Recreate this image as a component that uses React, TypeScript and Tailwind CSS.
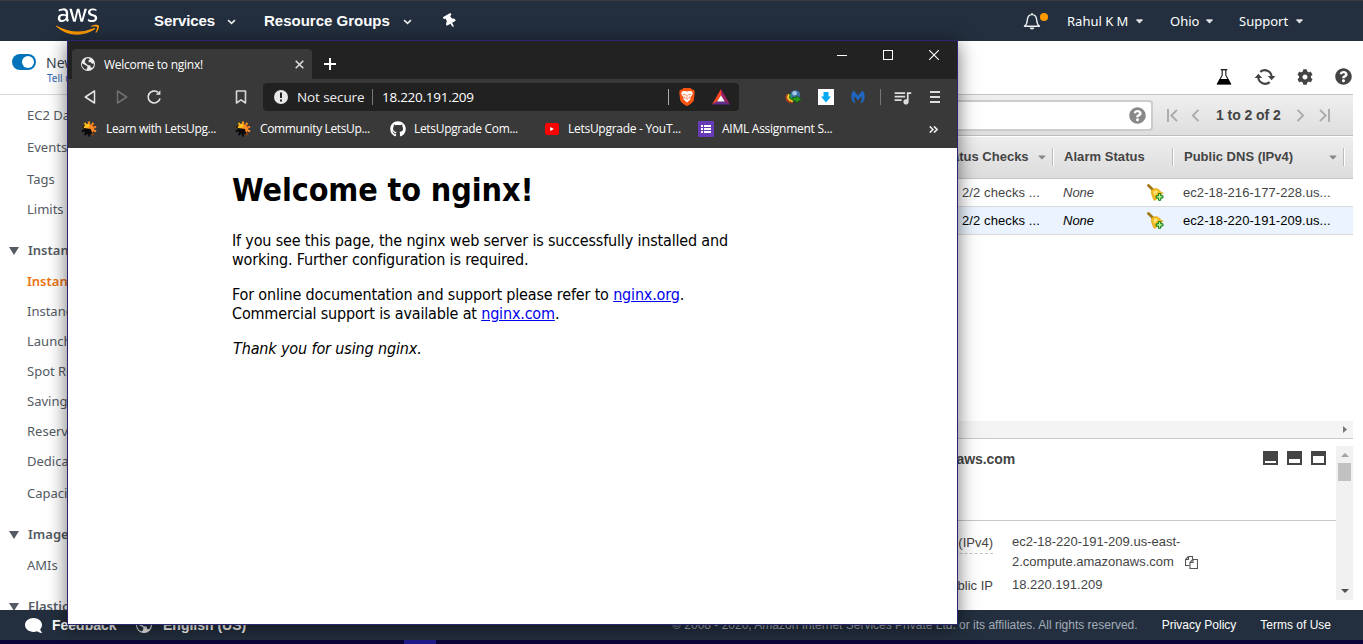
import React from "react";
import { FaAws, FaCaretDown, FaCog, FaGithub, FaQuestionCircle, FaThumbtack, FaComment } from "react-icons/fa";
import { MdQueueMusic } from "react-icons/md";

const chromeFont = "font-['Open_Sans','Noto_Sans',sans-serif]";
const ember = "font-['Noto_Sans',sans-serif]";

/* ---------- small drawings ---------- */

function Chevron({ className = "" }: { className?: string }) {
  return (
    <svg viewBox="0 0 10 7" className={`h-[6px] w-[9px] ${className}`} fill="none" stroke="#e4e6e8" strokeWidth="2">
      <path d="M1 1.2 5 5l4-3.8" />
    </svg>
  );
}

function SmallCaret({ className = "" }: { className?: string }) {
  return (
    <svg viewBox="0 0 8 5" className={`h-[5px] w-[7px] ${className}`}>
      <path d="M0.5 0h7v1L4.4 4.6h-.8L.5 1z" fill="#dfe1e4" />
    </svg>
  );
}

function GlobeIcon({ className = "", land }: { className?: string; land: string }) {
  return (
    <svg viewBox="0 0 14 14" className={className}>
      <circle cx="7" cy="7" r="7" fill="#ececec" />
      <path
        d="M5.200 1.600 8 1.300l.6 1.500-1.300.9.4 1.300 2 .3 1.300 1.500 2-.3-.4 2.600-1.300 1.700-1.500-.4-.5-2-2.600-.4L5 6.500 3.800 5.300l.2-1.500zM1 6.200l1.800 1 1.700 1 1.700.8.3 1.300-1.200 2.400-1.900-.7A6.400 6.400 0 0 1 1 6.200z"
        fill={land}
      />
    </svg>
  );
}

function BellIcon() {
  return (
    <svg viewBox="0 0 18 18" className="h-[18px] w-[18px]" fill="none" stroke="#eceef0" strokeWidth="1.4">
      <path d="M1.5 14.2c2.2-1.5 2.6-3.4 2.8-6 .2-3.300 1.800-5.600 4.700-5.600s4.500 2.300 4.700 5.600c.2 2.600.6 4.500 2.800 6z" strokeLinejoin="round" />
      <path d="M9 1v1.500" />
      <path d="M6.600 15.400h4.800c-.2 1.300-1.200 2-2.400 2s-2.200-.7-2.400-2z" fill="#eceef0" stroke="none" />
    </svg>
  );
}

function FlaskIcon() {
  return (
    <svg viewBox="0 0 16 16" className="h-4 w-4">
      <path d="M4.700.7h6.600" stroke="#222" strokeWidth="1.400" />
      <path d="M6.200 1v5.200L1.600 14.600h12.800L9.800 6.200V1" fill="none" stroke="#222" strokeWidth="1.200" />
      <path d="M3.900 10h8.200l3.100 5.400H.8z" fill="#000" />
    </svg>
  );
}

function RefreshIcon() {
  return (
    <svg viewBox="0 0 22 18" className="h-[18px] w-[22px]" fill="none" stroke="#444" strokeWidth="2.200">
      <path d="M6.300 3.900A6.900 6.900 0 0 1 17.700 8.500" />
      <path d="M15.700 14.100A6.900 6.900 0 0 1 4.300 9.500" />
      <path d="M13.800 8h7.600l-3.800 4.300z" fill="#444" stroke="none" />
      <path d="M.6 10h7.600L4.400 5.700z" fill="#444" stroke="none" />
    </svg>
  );
}

function BellAddIcon() {
  return (
    <svg viewBox="0 0 17 18" className="h-[18px] w-[17px]">
      <path d="M1.500 1.500 6 6" stroke="#a27613" strokeWidth="2.800" strokeLinecap="round" />
      <path d="M4.500 6.500C7 4 10.500 4 12.500 6.200c1.200 1.300 2 2.300 3.700 2.700L8.800 16c-1.200.6-2.200.2-2.500-1C5.800 12.500 3.300 9 4.500 6.500z" fill="#f0b91c" stroke="#d79c14" strokeWidth=".5" />
      <path d="M7 7c1.500-1.200 3-1 4 0l-3.300 5C7 10.500 6 8.500 7 7z" fill="#ffe27a" />
      <path d="M11.500 9.500h2.200v2.300H16V14h-2.300v2.300h-2.200V14H9.200v-2.200h2.300z" fill="#b9f29c" stroke="#0b7a12" strokeWidth="1" />
    </svg>
  );
}

function GearFlame() {
  const teeth = [0, 36, 72, 108, 144, 180, 216, 252, 288, 324];
  const colors = ["#fb9a1e", "#fb8c1e", "#fb7a2a", "#f58a33", "#8a4312", "#0a0a0a", "#0a0a0a", "#0a0a0a", "#3a2706", "#e8a70c"];
  return (
    <svg viewBox="0 0 16 16" className="h-4 w-4">
      {teeth.map((a, i) => (
        <rect key={a} x="6.900" y="0.500" width="2.200" height="4" fill={colors[i]} transform={`rotate(${a} 8 8)`} />
      ))}
      <circle cx="8" cy="8" r="5.200" fill="#0a0a0a" />
      <path d="M2.800 7A5.300 5.300 0 0 1 13.200 8a5.300 5.300 0 0 1-2 4.100L9.800 8z" fill="#fb8a22" />
      <path d="M2.800 7A5.300 5.300 0 0 1 8.600 2.800L8.300 6.600z" fill="#ffc21f" />
    </svg>
  );
}

function BraveIcon() {
  return (
    <svg viewBox="0 0 16 18" className="h-[18px] w-4">
      <path d="M4.500 0h7l1.500 1.600 2.200.4.500 3-1 7.500c-.3 1.600-5 5-6.700 5.500C6.300 17.500 1.600 14.100 1.300 12.500L.3 5l.5-3L3 1.600z" fill="#fb5412" />
      <path d="M3 3.500 5.500 3 8 3.500l2.500-.5 2.500.5.800 2.300-2.200 3.500-.2 2.300L8 14.600l-3.400-3-.2-2.300L2.200 5.800z" fill="#fff" />
      <path d="M4 6.300 6.700 7M12 6.300 9.300 7M8 6.500v3M6.300 10 8 11.200 9.700 10M5 8.500l.8 1.800M11 8.500l-.8 1.800" stroke="#fb5412" strokeWidth="0.800" fill="none" />
    </svg>
  );
}

function BatIcon() {
  return (
    <svg viewBox="0 0 18 16" className="h-4 w-[18px]">
      <path d="M9 0v6.200L5.200 12.500 0 15.500z" fill="#ff4724" />
      <path d="M9 0v6.200l3.800 6.300 5.200 3z" fill="#9e1f63" />
      <path d="M0 15.500l5.200-3h7.600l5.200 3z" fill="#662d91" />
      <path d="M9 6.200l3.800 6.300H5.200z" fill="#fff" />
    </svg>
  );
}

function IdmIcon() {
  return (
    <svg viewBox="0 0 17 14" className="h-[14px] w-[17px]">
      <circle cx="10.300" cy="5" r="4.800" fill="#3f73ad" />
      <circle cx="9.600" cy="3.200" r="2.300" fill="#a9c9e6" />
      <path d="M2.200 4.500C0 8 2 12.500 7.500 12.500" stroke="#c8371f" strokeWidth="1.500" fill="none" />
      <path d="M4 4.200C2 7.500 3.500 11 8 11.200" stroke="#f2d21a" strokeWidth="2" fill="none" />
      <path d="M5.600 4.200c-1 3 .3 4.800 3.700 5.200" stroke="#1e9c38" strokeWidth="1.700" fill="none" />
      <path d="M7.500 7.200l3.500.4V5.800L16.500 9 11 13.200V11H8z" fill="#2b9a1c" stroke="#0c4d0c" strokeWidth=".6" />
    </svg>
  );
}

function MalwareIcon() {
  return (
    <svg viewBox="0 0 14 14" className="h-[14px] w-[14px]">
      <path d="M2.500.5C0 3.500-.6 8 2 11.700c.8 1 1.800 1.500 2.600 1.500C3.200 11 3 8.500 3.600 6.300L7 10.500l3.400-4.200c.6 2.200.4 4.700-1 6.900.8 0 1.800-.5 2.600-1.500 2.600-3.700 2-8.200-.5-11.200L7 5.800z" fill="#1f66c1" />
    </svg>
  );
}

function DownloadTile() {
  return (
    <svg viewBox="0 0 16 16" className="h-4 w-4">
      <rect width="16" height="16" fill="#fff" />
      <path d="M5.500 3h5v4.500H13L8 13.500 3 7.500h2.500z" fill="#03a9f4" />
    </svg>
  );
}

function FormsIcon() {
  return (
    <svg viewBox="0 0 16 16" className="h-4 w-4">
      <rect width="16" height="16" rx="1" fill="#673ab7" />
      <path d="M3 4h2v2H3zM3 7h2v2H3zM3 10h2v2H3zM6 4h7v2H6zM6 7h7v2H6zM6 10h7v2H6z" fill="#fff" />
    </svg>
  );
}

function CopyIcon() {
  return (
    <svg viewBox="0 0 13 13" className="h-[13px] w-[13px]" fill="none" stroke="#555" strokeWidth="1.100">
      <path d="M4.500 9.500h-4v-6l2.800-3h4.200v3" />
      <path d="M3.500.5v3h-3" />
      <path d="M5 6.300 7.700 3.500h4.800v9H5z" fill="#fff" />
      <path d="M8 3.500v3H5" />
    </svg>
  );
}

function PagerArrow({ last, flip }: { last?: boolean; flip?: boolean }) {
  return (
    <svg viewBox="0 0 11 13" className={`h-[13px] w-[11px] ${flip ? "-scale-x-100" : ""}`} fill="none" stroke="#ababab" strokeWidth="1.900">
      {last && <path d="M1 0v13" />}
      <path d={last ? "M10 .8 4.300 6.500 10 12.200" : "M8.500.8 2.800 6.500l5.700 5.700"} />
    </svg>
  );
}

/* ---------- console behind the browser ---------- */

function ConsoleHeader() {
  return (
    <header className="flex h-[41px] shrink-0 items-center border-t border-[#3a3a3a] bg-[#232f3e] text-white">
      <svg width="0" height="0" className="absolute">
        <linearGradient id="awsFill" gradientUnits="userSpaceOnUse" x1="0" y1="0" x2="0" y2="512">
          <stop offset="0.585" stopColor="#fff" />
          <stop offset="0.585" stopColor="#ff9900" />
        </linearGradient>
      </svg>
      <div className="ml-[56px] flex w-[98px] pt-px">
        <FaAws className="h-[35px] w-[43px]" fill="url(#awsFill)" preserveAspectRatio="none" />
      </div>
      <nav className="flex flex-1 items-center font-['Liberation_Sans',sans-serif] text-[15px] font-bold">
        <div className="flex w-[110px] items-center">
          <span className="w-[73px] tracking-[-0.1px]">Services</span>
          <Chevron className="mt-[2px]" />
        </div>
        <div className="flex w-[180px] items-center">
          <span className="w-[139px]">Resource Groups</span>
          <Chevron className="mt-[2px]" />
        </div>
        <FaThumbtack className="h-[14px] w-[12px] -rotate-[30deg]" />
      </nav>
      <div className={`flex items-center text-[13px] ${ember}`}>
        <div className="flex w-[44px]">
          <BellIcon />
          <span className="-ml-px mt-px h-[8px] w-[8px] rounded-full bg-[#ff9900]" />
        </div>
        <div className="flex w-[103px] items-center">
          <span className="w-[69px] whitespace-nowrap pt-[2px]">Rahul K M</span>
          <SmallCaret className="mt-px" />
        </div>
        <div className="flex w-[69px] items-center">
          <span className="w-[36px] pt-[2px]">Ohio</span>
          <SmallCaret className="mt-px" />
        </div>
        <div className="flex w-[124px] items-center">
          <span className="w-[57px] pt-[2px]">Support</span>
          <SmallCaret className="mt-px" />
        </div>
      </div>
    </header>
  );
}

type Item = { label: string; cls: string; kind?: "group" | "active" };

const sideItems: Item[] = [
  { label: "EC2 Dashboard", cls: "mt-[5px] h-8" },
  { label: "Events", cls: "h-8" },
  { label: "Tags", cls: "h-[31px]" },
  { label: "Limits", cls: "h-[30px]" },
  { label: "Instances", cls: "mt-[11px] h-[30px]", kind: "group" },
  { label: "Instances", cls: "mt-px h-[30px]", kind: "active" },
  { label: "Instance Types", cls: "h-[30px]" },
  { label: "Launch Templates", cls: "h-[30px]" },
  { label: "Spot Requests", cls: "h-[30px]" },
  { label: "Savings Plans", cls: "h-[30px]" },
  { label: "Reserved Instances", cls: "h-[30px]" },
  { label: "Dedicated Hosts", cls: "h-[30px]" },
  { label: "Capacity Reservations", cls: "mt-px h-8" },
  { label: "Images", cls: "mt-[10px] h-[30px]", kind: "group" },
  { label: "AMIs", cls: "mt-px h-[30px]" },
  { label: "Elastic Block Store", cls: "mt-[11px] h-[30px]", kind: "group" },
];

function Sidebar() {
  return (
    <aside className={`w-[190px] shrink-0 overflow-hidden whitespace-nowrap text-[13px] text-[#545b64] ${ember}`}>
      <div className="flex h-[54px] border-b border-[#d5dbdb] pl-3 pt-[13px]">
        <span className="flex h-4 w-6 items-center justify-end rounded-full bg-[#0073bb] pr-[2px]">
          <span className="h-3 w-3 rounded-full bg-white" />
        </span>
        <div className="ml-[10px] flex flex-col">
          <span className="-mt-px text-[14px] leading-[19px] text-[#37424f]">New EC2 Experience</span>
          <span className="pl-px text-[10px] leading-[12px] text-[#3568b5]">Tell us what you think</span>
        </div>
      </div>
      <ul>
        {sideItems.map((it, i) => (
          <li key={i} className={`flex shrink-0 items-center ${it.cls}`}>
            {it.kind === "group" ? (
              <>
                <svg viewBox="0 0 10 8" className="-mt-px ml-[9px] mr-[9px] h-2 w-[10px]">
                  <path d="M0 0h10L5 8z" fill="#545b64" />
                </svg>
                <span className="font-semibold">{it.label}</span>
              </>
            ) : (
              <span className={it.kind === "active" ? "ml-[27px] font-semibold text-[#ec7211]" : "ml-[27px]"}>{it.label}</span>
            )}
          </li>
        ))}
      </ul>
    </aside>
  );
}

function InstanceRow({ dns, selected }: { dns: string; selected?: boolean }) {
  return (
    <div className={`flex h-7 items-center justify-end border-b border-[#d9d9d9] pr-[10px] ${selected ? "bg-[#eaf3fe] text-black" : "text-[#444]"}`}>
      <span className="w-[101px] tracking-[0.1px]">2/2 checks ...</span>
      <span className="w-[84px] italic">None</span>
      <span className="w-9">
        <BellAddIcon />
      </span>
      <span className="w-[160px] tracking-[0.07px]">{dns}</span>
    </div>
  );
}

function PanelGlyph({ body }: { body: string }) {
  return (
    <span className="flex h-[14px] w-[15px] items-end bg-[#444] p-[2px]">
      <span className={`w-full bg-white ${body}`} />
    </span>
  );
}

function Instances() {
  return (
    <main className="flex min-w-0 flex-1 flex-col pr-[10px] font-['Liberation_Sans',sans-serif] text-[13px]">
      <div className="-mr-[10px] flex h-[53px] shrink-0 items-center justify-end pr-[12px] pt-[18px] text-[#444]">
        <span className="w-[38px]"><FlaskIcon /></span>
        <span className="w-[43px]"><RefreshIcon /></span>
        <span className="w-[38px]"><FaCog className="h-4 w-4" /></span>
        <FaQuestionCircle className="-mr-px h-[17px] w-[17px]" />
      </div>

      <div className="flex h-[42px] shrink-0 items-center border-y border-t-[#c4c4c4] border-b-[#bdbdbd] bg-linear-to-b from-[#efefef] to-[#dedede] pr-[23px]">
        <div className="ml-3 flex h-[31px] flex-1 items-center justify-end rounded-[4px] border-2 border-[#ccc] bg-white pr-[5px]">
          <FaQuestionCircle className="h-[17px] w-[17px] text-[#888]" />
        </div>
        <div className="flex w-[177px] items-center pl-[14px] text-[14px] font-bold text-[#444]">
          <PagerArrow last />
          <span className="ml-[12px] w-[26px]"><PagerArrow /></span>
          <span className="w-[79px] whitespace-nowrap tracking-[-0.05px]">1 to 2 of 2</span>
          <span className="flex w-[24px]"><PagerArrow flip /></span>
          <PagerArrow last flip />
        </div>
      </div>

      <div className="mt-px flex h-[42px] shrink-0 items-center justify-end border-b border-[#c4c4c4] bg-linear-to-b from-[#eee] to-[#dcdcdc] pb-px pr-[8px] font-bold text-[#444]">
        <span className="w-[97px] whitespace-nowrap">Status Checks</span>
        <FaCaretDown className="h-3 w-3 text-[#888]" />
        <span className="ml-1 h-[18px] w-[2px] border-l border-[#bbb] bg-white" />
        <span className="ml-[10px] w-[108px] tracking-[0.05px]">Alarm Status</span>
        <span className="h-[18px] w-[2px] border-l border-[#bbb] bg-white" />
        <span className="ml-[10px] w-[143px]">Public DNS (IPv4)</span>
        <FaCaretDown className="h-3 w-3 text-[#888]" />
        <span className="ml-1 h-[18px] w-[2px] border-l border-[#bbb] bg-white" />
      </div>
      <InstanceRow dns="ec2-18-216-177-228.us..." />
      <InstanceRow dns="ec2-18-220-191-209.us..." selected />
      <div className="flex-1" />
      <div className="flex h-[18px] shrink-0 items-center justify-end border-b border-[#c8c8c8] bg-[#f4f4f4] pr-[6px]">
        <svg viewBox="0 0 4 7" className="h-[7px] w-1"><path d="M0 0l4 3.500L0 7z" fill="#777" /></svg>
      </div>

      <div className="flex h-[171px] shrink-0 pb-[10px] pt-[7px] text-[#444]">
        <section className="flex flex-1 flex-col">
          <div className="flex h-[75px] justify-end border-b border-[#c8c8c8] pr-[10px] pt-[5px]">
            <span className="-mt-[2px] mr-[248px] text-[14px] font-bold tracking-[-0.1px]">ec2-18-220-191-209.us-east-2.compute.amazonaws.com</span>
            <div className="flex gap-[9px]">
              <PanelGlyph body="h-[2px]" />
              <PanelGlyph body="h-[4px]" />
              <PanelGlyph body="h-[7px]" />
            </div>
          </div>
          <dl className="flex flex-1 justify-end pt-[11px]">
            <div className="w-[120px] text-right">
              <dt className="inline-block whitespace-nowrap border-b border-dashed border-[#c4c4c4] leading-[21px]">Public DNS (IPv4)</dt>
              <dt className="mt-[21px] leading-[22px]">IPv4 Public IP</dt>
            </div>
            <div className="ml-[19px] w-[324px] leading-5">
              <dd>
                ec2-18-220-191-209.us-east-
                <span className="flex items-center gap-[11px]">
                  2.compute.amazonaws.com <CopyIcon />
                </span>
              </dd>
              <dd className="mt-[3px]">18.220.191.209</dd>
            </div>
          </dl>
        </section>
        <div className="flex w-[17px] flex-col items-center bg-[#f1f1f1]">
          <svg viewBox="0 0 8 4" className="mt-[7px] h-1 w-2"><path d="M0 4 4 0l4 4z" fill="#a3a3a3" /></svg>
          <span className="mt-[6px] h-[18px] w-[13px] bg-[#c1c1c1]" />
          <span className="flex-1" />
          <svg viewBox="0 0 8 4" className="mb-[7px] h-1 w-2"><path d="M0 0l4 4 4-4z" fill="#505050" /></svg>
        </div>
      </div>
    </main>
  );
}

function ConsoleFooter() {
  return (
    <footer className="flex h-[30px] shrink-0 items-center whitespace-nowrap bg-[#232f3e] font-['Liberation_Sans',sans-serif] text-[12px] text-white">
      <FaComment className="ml-[25px] h-[17px] w-[17px] -scale-x-100" />
      <span className="ml-[10px] w-[84px] text-[14px] font-bold">Feedback</span>
      <GlobeIcon className="h-4 w-4" land="#232f3e" />
      <span className="ml-[11px] text-[14px] font-bold">English (US)</span>
      <span className="flex-1" />
      <span className="text-[#a3adb8]">© 2008 - 2020, Amazon Internet Services Private Ltd. or its affiliates. All rights reserved.</span>
      <span className="ml-[24px]">Privacy Policy</span>
      <span className="ml-6 mr-8">Terms of Use</span>
    </footer>
  );
}

/* ---------- browser window ---------- */

function TitleBar() {
  return (
    <div className="flex h-[38px] shrink-0 items-end bg-[#222] pl-1">
      <div className="flex h-[30px] w-[240px] items-center rounded-t-[4px] bg-[#393939] pl-[9px]">
        <GlobeIcon className="h-[14px] w-[14px]" land="#393939" />
        <span className="ml-[9px] flex-1 whitespace-nowrap pt-px text-[12px] tracking-[-0.25px] text-white">Welcome to nginx!</span>
        <svg viewBox="0 0 9 9" className="mr-2 h-[9px] w-[9px]" stroke="#e2e2e2" strokeWidth="1.500">
          <path d="M.7.7l7.600 7.600M8.300.7.7 8.300" />
        </svg>
      </div>
      <svg viewBox="0 0 12 12" className="mb-[9px] ml-3 h-3 w-3" stroke="#fff" strokeWidth="2">
        <path d="M6 0v12M0 6h12" />
      </svg>
      <div className="mb-[19px] ml-auto mr-[18px] flex items-center">
        <span className="mr-9 h-px w-[10px] bg-white" />
        <span className="mr-[36px] h-[10px] w-[10px] border border-white" />
        <svg viewBox="0 0 10 10" className="h-[10px] w-[10px]" stroke="#fff" strokeWidth="1.100">
          <path d="M0 0l10 10M10 0 0 10" />
        </svg>
      </div>
    </div>
  );
}

function AddressRow() {
  return (
    <div className="flex h-9 items-center">
      <svg viewBox="0 0 12 14" className="ml-4 h-[14px] w-3" fill="none" stroke="#e4e4e4" strokeWidth="1.500" strokeLinejoin="round">
        <path d="M10.500 1v12L1.300 7z" />
      </svg>
      <svg viewBox="0 0 12 14" className="ml-[20px] h-[14px] w-3" fill="none" stroke="#707070" strokeWidth="1.500" strokeLinejoin="round">
        <path d="M1.500 1v12L10.700 7z" />
      </svg>
      <svg viewBox="0 0 16 16" className="ml-[18px] h-4 w-4" fill="none" stroke="#e4e4e4" strokeWidth="1.700">
        <path d="M14 9.500A6 6 0 1 1 11.800 3.200" />
        <path d="M9.800 5.800h4.600V1.300z" fill="#e4e4e4" stroke="none" />
      </svg>
      <svg viewBox="0 0 12 14" className="ml-[73px] h-[14px] w-3" fill="none" stroke="#d6d6d6" strokeWidth="1.600" strokeLinejoin="round">
        <path d="M1.500 1h9v12L6 9.800 1.500 13z" />
      </svg>
      <div className="ml-4 flex h-7 w-[476px] items-center rounded-[4px] bg-[#212121] pl-[11px] text-[13.500px] text-[#eee]">
        <svg viewBox="0 0 14 14" className="h-[14px] w-[14px]">
          <circle cx="7" cy="7" r="7" fill="#e8e8e8" />
          <path d="M6 2.500h2v5.500H6zM6 9.500h2v2H6z" fill="#212121" />
        </svg>
        <span className="ml-[9px] w-[75px] whitespace-nowrap tracking-[-0.1px]">Not secure</span>
        <span className="h-4 w-px bg-[#777]" />
        <span className="ml-[9px] flex-1 tracking-[-0.27px] text-white">18.220.191.209</span>
        <span className="mr-[10px] h-4 w-px bg-[#aaa]" />
        <BraveIcon />
        <span className="ml-[17px] mr-[9px]"><BatIcon /></span>
      </div>
      <span className="ml-[46px] w-[33px]"><IdmIcon /></span>
      <span className="w-[33px]"><DownloadTile /></span>
      <span className="w-[29px]"><MalwareIcon /></span>
      <span className="h-4 w-px bg-[#777]" />
      <MdQueueMusic className="ml-[11px] h-[21px] w-[21px] text-[#dedede]" />
      <svg viewBox="0 0 10 12" className="ml-[17px] h-3 w-[10px]" stroke="#dedede" strokeWidth="1.800">
        <path d="M0 1h10M0 6h10M0 11h10" />
      </svg>
    </div>
  );
}

const bookmarks = [
  { icon: <span className="-ml-px"><GearFlame /></span>, text: "Learn with LetsUpg...", track: "tracking-[-0.34px]" },
  { icon: <span className="-ml-px"><GearFlame /></span>, text: "Community LetsUp...", track: "tracking-[-0.36px]" },
  { icon: <FaGithub className="h-4 w-4 text-white" />, text: "LetsUpgrade Com...", track: "tracking-[-0.32px]" },
  {
    icon: (
      <svg viewBox="0 0 14 12" className="ml-px h-3 w-[14px]">
        <rect width="14" height="12" rx="2" fill="#f00" />
        <path d="M5.200 4v4L9 6z" fill="#fff" />
      </svg>
    ),
    text: "LetsUpgrade - YouT...",
    track: "tracking-[-0.28px]",
  },
  { icon: <FormsIcon />, text: "AIML Assignment S...", track: "tracking-[-0.26px]" },
];

function BookmarkRow() {
  return (
    <div className="flex h-[28px] items-center pl-[14px] text-[12px] text-white">
      {bookmarks.map((b) => (
        <div key={b.text} className="flex w-[154px] items-center whitespace-nowrap">
          <span className="flex w-6">{b.icon}</span>
          <span className={b.track}>{b.text}</span>
        </div>
      ))}
      <svg viewBox="0 0 9 7" className="ml-auto mr-[19px] h-[7px] w-[9px]" fill="none" stroke="#eee" strokeWidth="1.600">
        <path d="M.8.4 3.900 3.500.8 6.600M5 .4l3.100 3.100L5 6.600" />
      </svg>
    </div>
  );
}

function NginxPage() {
  return (
    <article className="flex-1 whitespace-nowrap bg-white pl-[164px] pt-[23px] font-['DejaVu_Sans_Condensed','DejaVu_Sans',sans-serif] text-[16px] leading-[19px] text-black">
      <h1 className="text-[32px] font-bold leading-[39px] tracking-[-0.1px]">Welcome to nginx!</h1>
      <p className="mt-[21px] tracking-[-0.17px]">
        If you see this page, the nginx web server is successfully installed and
        <br />
        working. Further configuration is required.
      </p>
      <p className="mt-4 tracking-[-0.17px]">
        For online documentation and support please refer to <a className="text-[#0000ee] underline">nginx.org</a>.
        <br />
        Commercial support is available at <a className="text-[#0000ee] underline">nginx.com</a>.
      </p>
      <p className="mt-4 pl-px italic tracking-[-0.13px]">Thank you for using nginx.</p>
    </article>
  );
}

function BrowserWindow() {
  return (
    <div className={`absolute left-[67px] top-[40px] flex h-[585px] w-[891px] flex-col overflow-hidden border border-[#2c2670] shadow-[0_3px_18px_rgba(0,0,0,0.55)] ${chromeFont}`}>
      <TitleBar />
      <div className="h-[69px] shrink-0 bg-[#393939]">
        <AddressRow />
        <BookmarkRow />
      </div>
      <NginxPage />
    </div>
  );
}

export default function App() {
  return (
    <div className="relative flex h-[644px] w-[1363px] flex-col overflow-hidden bg-white">
      <ConsoleHeader />
      <div className="flex min-h-0 flex-1">
        <Sidebar />
        <Instances />
      </div>
      <ConsoleFooter />
      <div className="flex h-1 shrink-0 bg-[#0a0438]">
        <span className="ml-[404px] w-8 bg-[#1e1a8c]" />
      </div>
      <BrowserWindow />
    </div>
  );
}
